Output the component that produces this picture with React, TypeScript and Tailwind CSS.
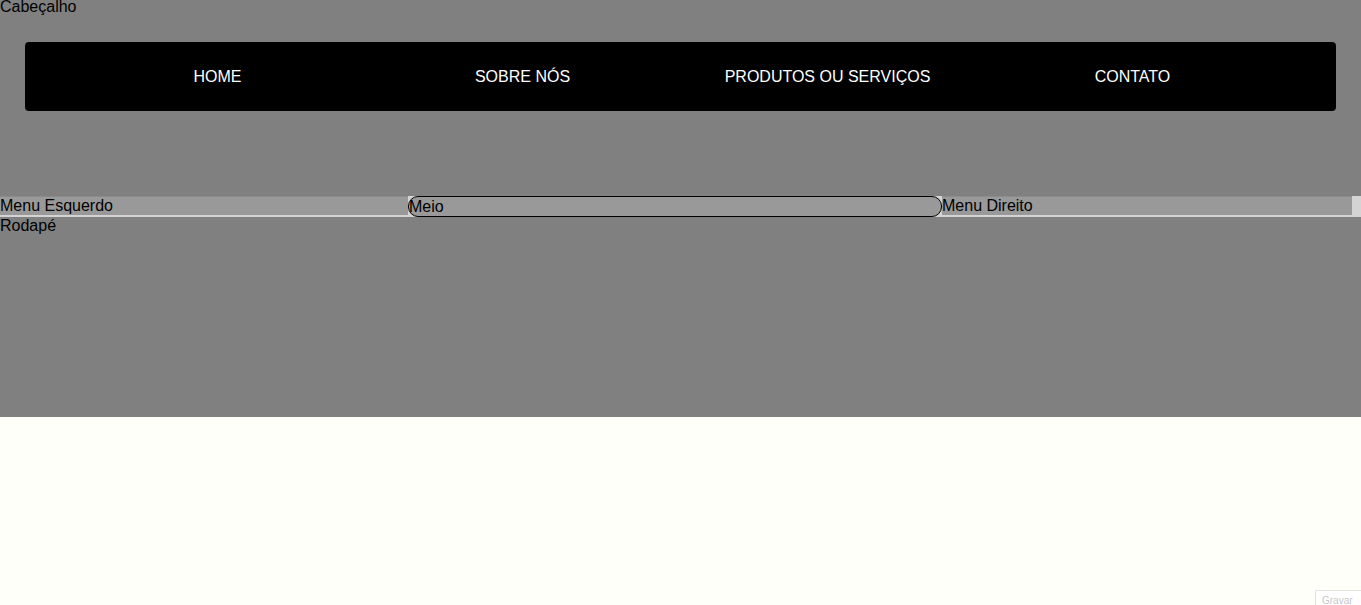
const links = ["HOME", "SOBRE NÓS", "PRODUTOS OU SERVIÇOS", "CONTATO"];

export default function App() {
  return (
    <div className="relative min-h-screen bg-[#fffffa] font-['Liberation_Sans',Arial,sans-serif] text-[16px] leading-[18px] text-black">
      <div className="bg-[#808080]">
        <header className="h-[196px]">
          <p className="h-[18px] leading-[14px]">Cabeçalho</p>
          <nav className="mx-[25px] mt-[24px] flex h-[69px] items-center rounded-[4px] bg-black pl-10">
            {links.map((l) => (
              <a key={l} href="#" className="w-[305px] text-center text-white">
                {l}
              </a>
            ))}
          </nav>
        </header>

        <section className="flex h-[21px] bg-[#d4d4d4]">
          <div className="h-[19px] w-[408px] border-t border-[#8c8c8c] bg-[#999999]">Menu Esquerdo</div>
          <div className="h-[21px] w-[534px] rounded-[10px] border border-black bg-[#999999] leading-[19px]">
            Meio
          </div>
          <div className="h-[19px] w-[410px] border-t border-[#8c8c8c] bg-[#999999]">Menu Direito</div>
        </section>

        <footer className="h-[200px]">Rodapé</footer>
      </div>

      <div className="absolute bottom-0 right-0 h-[15px] w-[46px] border-l border-t border-[#e2e2e2] bg-white pl-[6px] pt-[5px] text-[10px] leading-[10px] text-[#c8c8c8]">
        Gravar
      </div>
    </div>
  );
}
